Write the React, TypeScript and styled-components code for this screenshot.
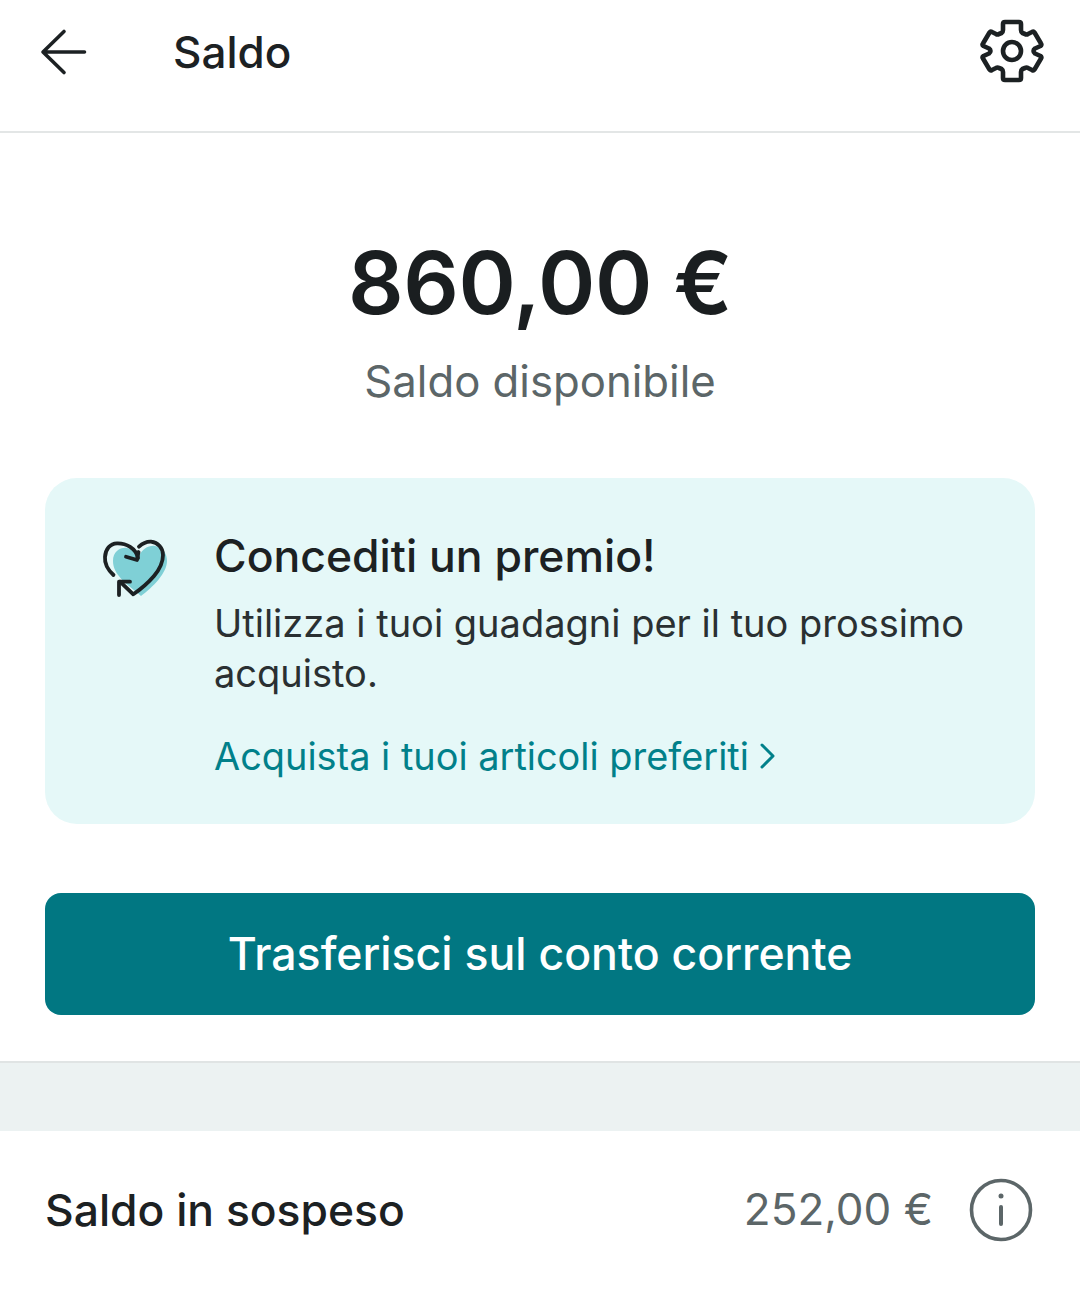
import styled, { createGlobalStyle } from "styled-components";

const GlobalStyle = createGlobalStyle`
  html, body {
    margin: 0;
    background: #fff;
    font-family: Inter, "Liberation Sans", sans-serif;
    color: #1c2123;
  }
`;

const Page = styled.div`
  width: 1080px;
  height: 1293px;
  overflow: hidden;
  background: #fff;
`;

// top bar
const Header = styled.header`
  height: 105px;
  border-bottom: 2px solid #e3e6e6;
  display: flex;
  align-items: center;
  padding: 0 34px 26px 38px;
`;
const BackIcon = styled.svg`
  width: 50px;
  height: 50px;
  flex: none;
  margin-top: -2px;
`;
const Title = styled.h1`
  margin: -2px 0 0 85px;
  flex: 1;
  font-size: 44px;
  font-weight: 450;
  line-height: 54px;
`;
const GearIcon = styled.svg`
  width: 68px;
  height: 68px;
  flex: none;
  margin-top: -3px;
`;

// balance
const Balance = styled.section`
  display: flex;
  flex-direction: column;
  align-items: center;
  padding-top: 97px;
`;
const Amount = styled.div`
  font-size: 87px;
  font-weight: 600;
  line-height: 106px;
  letter-spacing: -0.4px;
  color: #1a1e20;
`;
const AmountLabel = styled.div`
  margin-top: 19px;
  font-size: 43.7px;
  line-height: 54px;
  color: #5c6668;
`;

// promo card
const Promo = styled.section`
  margin: 69px 45px 0;
  height: 346px;
  box-sizing: border-box;
  padding: 49px 40px 0 56px;
  display: flex;
  background: #e5f8f8;
  border-radius: 32px;
`;
const HeartIcon = styled.svg`
  width: 70px;
  height: 66px;
  flex: none;
  margin-top: 10px;
`;
const PromoBody = styled.div`
  margin-left: 43px;
  flex: 1;
`;
const PromoTitle = styled.h2`
  margin: 0;
  font-size: 44.5px;
  font-weight: 500;
  line-height: 58px;
`;
const PromoText = styled.p`
  margin: 13px 0 0;
  font-size: 38px;
  line-height: 50px;
  color: #2a3032;
`;
const PromoLink = styled.a`
  display: flex;
  align-items: center;
  gap: 10px;
  margin-top: 33px;
  font-size: 37.9px;
  line-height: 50px;
  color: #01808a;
`;

const TransferButton = styled.button`
  display: block;
  margin: 69px 45px 0;
  width: 990px;
  height: 122px;
  border: 0;
  border-radius: 16px;
  background: #017782;
  color: #fff;
  font-family: inherit;
  font-size: 44.6px;
  font-weight: 500;
`;

const Band = styled.div`
  margin-top: 46px;
  height: 68px;
  background: #ecf2f2;
  border-top: 2px solid #e0e4e4;
`;

const PendingRow = styled.section`
  display: flex;
  align-items: center;
  height: 158px;
  padding: 0 47px 0 45px;
`;
const PendingLabel = styled.div`
  flex: 1;
  font-size: 44.4px;
  font-weight: 450;
  padding-bottom: 1px;
`;
const PendingValue = styled.div`
  font-size: 44px;
  color: #5c6668;
  padding-bottom: 2px;
`;
const InfoIcon = styled.svg`
  width: 64px;
  height: 64px;
  margin-left: 36px;
  flex: none;
`;

export default function App() {
  return (
    <Page>
      <GlobalStyle />
      <Header>
        <BackIcon viewBox="0 0 50 50" fill="none" stroke="#1c2123" strokeWidth="3.6" strokeLinecap="round" strokeLinejoin="round">
          <path d="M6 25H46.500M26 4.500 5 25l21 20.500" />
        </BackIcon>
        <Title>Saldo</Title>
        <GearIcon viewBox="0 0 68 68" fill="none" stroke="#1c2123" strokeWidth="4.6" strokeLinejoin="round">
          <path d="M27 5Q25 5 25 7V13Q25 15 23.500 16L21 17Q19.500 18 18 17L14 15Q12.500 14 11.500 15.500L5 26.500Q4 28 5.500 29L11 31.500Q12.500 32.500 12.500 34T11 36.500L5.500 39Q4 40 5 41.500L11.500 52.500Q12.500 54 14 53L18 51Q19.500 50 21 51L23.500 52Q25 53 25 55V61Q25 63 27 63H41Q43 63 43 61V55Q43 53 44.500 52L47 51Q48.500 50 50 51L54 53Q55.500 54 56.500 52.500L63 41.500Q64 40 62.500 39L57 36.500Q55.500 35.500 55.500 34T57 31.500L62.500 29Q64 28 63 26.500L56.500 15.500Q55.500 14 54 15L50 17Q48.500 18 47 17L44.500 16Q43 15 43 13V7Q43 5 41 5Z" />
          <circle cx="34" cy="34" r="9" />
        </GearIcon>
      </Header>

      <Balance>
        <Amount>860,00 €</Amount>
        <AmountLabel>Saldo disponibile</AmountLabel>
      </Balance>

      <Promo>
        <HeartIcon viewBox="0 0 70 66" fill="none">
          <path d="M40 59C25 46 12 38 12 24 12 14 20 10 26 11 31 12 35 15 38 19 41 12 48 8 54 9 62 10 66 17 66 24 66 36 52 50 40 59Z" fill="#7fd0d6" />
          <g stroke="#1c2123" strokeWidth="3.8" strokeLinecap="round" strokeLinejoin="round">
            <path d="M12.500 38C6 32 3.500 26 4 20 4.500 12 9 6.500 16 6.300 25 6 35 11 37 21" />
            <path d="M25 19.700 36 23 37.500 15" />
            <path d="M38 9.700C42 6 46 4.500 50 4.700 57 5.500 62 11 62 18 62 26 58 33 53 39 47 46 40 52 32.300 57.300L19 44.700" />
            <path d="M18 58V44.700H29" />
          </g>
        </HeartIcon>
        <PromoBody>
          <PromoTitle>Concediti un premio!</PromoTitle>
          <PromoText>Utilizza i tuoi guadagni per il tuo prossimo acquisto.</PromoText>
          <PromoLink>
            Acquista i tuoi articoli preferiti
            <svg width="16" height="28" viewBox="0 0 16 28" fill="none" stroke="#01808a" strokeWidth="3" strokeLinecap="round" strokeLinejoin="round">
              <path d="M3 3l11 11L3 25" />
            </svg>
          </PromoLink>
        </PromoBody>
      </Promo>

      <TransferButton>Trasferisci sul conto corrente</TransferButton>

      <Band />

      <PendingRow>
        <PendingLabel>Saldo in sospeso</PendingLabel>
        <PendingValue>252,00 €</PendingValue>
        <InfoIcon viewBox="0 0 64 64" fill="none" stroke="#5c6668" strokeWidth="3.6" strokeLinecap="round">
          <circle cx="32" cy="32" r="29.500" />
          <path d="M32 29v17" strokeWidth="4" />
          <circle cx="32" cy="18" r="2.500" fill="#5c6668" stroke="none" />
        </InfoIcon>
      </PendingRow>
    </Page>
  );
}
